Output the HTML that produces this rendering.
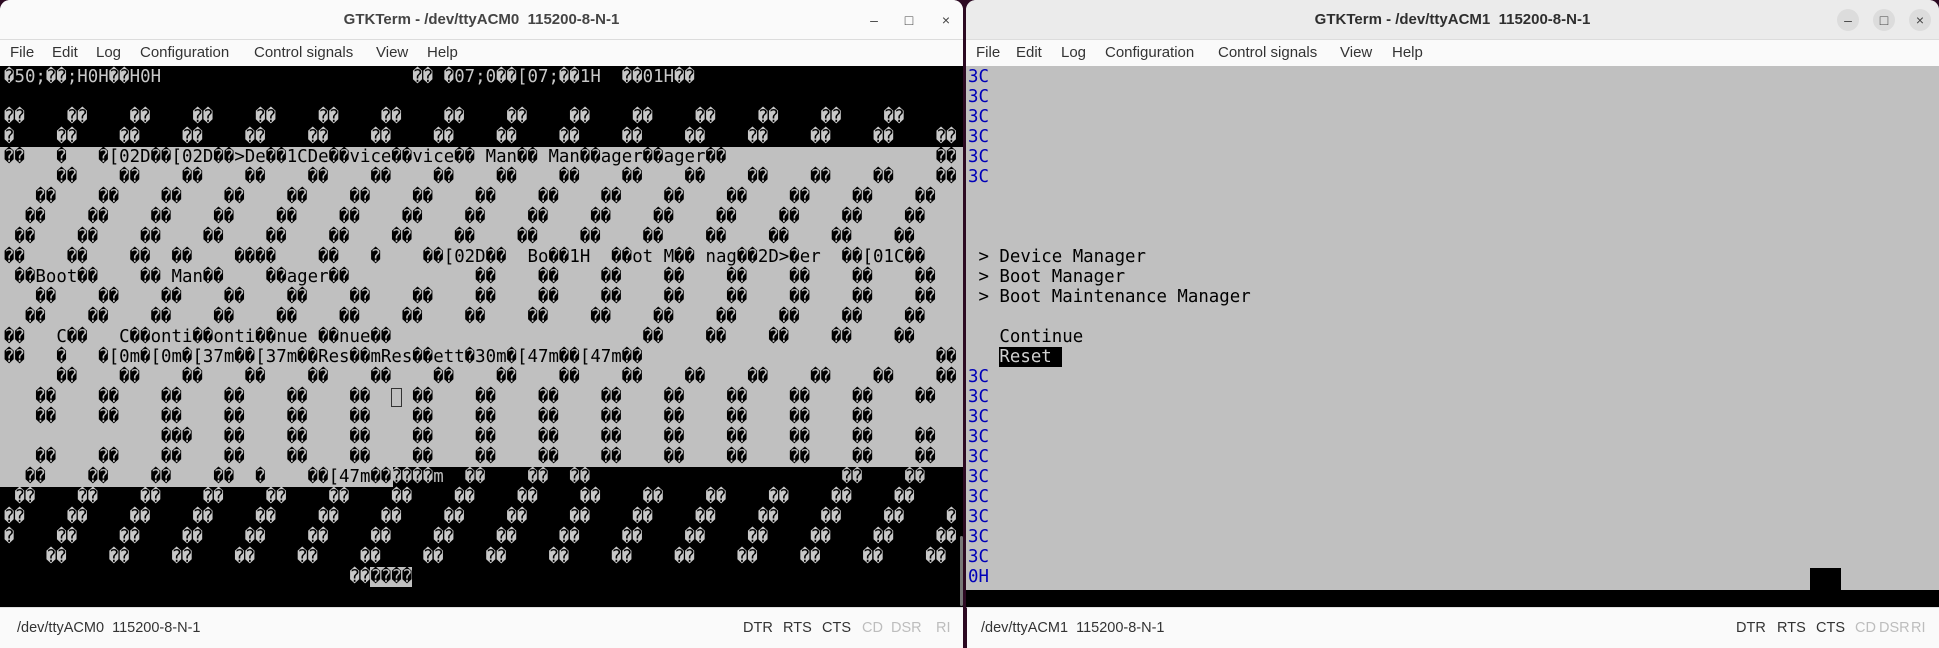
<!DOCTYPE html>
<html><head><meta charset="utf-8"><style>
*{margin:0;padding:0;box-sizing:border-box}
body{width:1939px;height:648px;overflow:hidden;background:#2c0a22;position:relative;font-family:"Liberation Sans","DejaVu Sans",sans-serif}
.win{position:absolute;top:0;height:648px;overflow:hidden;border-radius:10px 10px 0 0;background:#fafafa}
.title{position:absolute;left:0;right:0;top:0;height:40px;border-bottom:1px solid #dcdcdc;font-weight:bold;font-size:15px;color:#2e2e2e;text-align:center;line-height:40px}
.menu{position:absolute;left:0;right:0;top:40px;height:26px;background:#fafafa;font-size:15px;color:#333}
.menu span{position:absolute;top:4px}
.term{position:absolute;left:0;right:0;top:66px;height:541px;background:#000;font-family:"DejaVu Sans Mono","Liberation Mono",monospace;font-size:17.4px}
.row{position:absolute;left:4px;height:20px;line-height:20px;white-space:pre}
.status{position:absolute;left:0;right:0;top:607px;height:41px;background:#fafafa;font-size:14.5px;color:#333;border-top:1px solid #e0e0e0}
.status span{position:absolute;top:12px}
.dim{color:#bdbdbd}
.btn{position:absolute;top:9px;width:22px;height:22px;border-radius:11px;text-align:center;line-height:22px;font-size:14px;color:#444;font-weight:normal}
</style></head><body>

<!-- LEFT WINDOW -->
<div class="win" style="left:0;width:963px">
 <div class="title" style="background:#fafafa;color:#444">GTKTerm - /dev/ttyACM0&nbsp; 115200-8-N-1
  <div class="btn" style="left:863px">–</div><div class="btn" style="left:898px">□</div><div class="btn" style="left:935px">×</div>
 </div>
 <div class="menu"><span style="left:10px">File</span><span style="left:52px">Edit</span><span style="left:96px">Log</span><span style="left:140px">Configuration</span><span style="left:254px">Control signals</span><span style="left:376px">View</span><span style="left:427px">Help</span></div>
 <div class="term" style="color:#c8c8c8">
  <div style="position:absolute;left:0;top:81px;width:963px;height:320px;background:#c0c0c0"></div>
  <div style="position:absolute;left:0;top:401px;width:393px;height:20px;background:#c0c0c0"></div>
  <div style="position:absolute;right:0;top:470px;width:3px;height:70px;background:#777;border-radius:2px"></div>
  <div class="row" style="top:1px">�50;��;H0H��H0H                        �� �07;0��[07;��1H  ��01H��</div>
  <div class="row" style="top:41px">��    ��    ��    ��    ��    ��    ��    ��    ��    ��    ��    ��    ��    ��    ��</div>
  <div class="row" style="top:61px">�    ��    ��    ��    ��    ��    ��    ��    ��    ��    ��    ��    ��    ��    ��    ��</div>
  <div style="color:#000">
  <div class="row" style="top:81px">��   �   �[02D��[02D��>De��1CDe��vice��vice�� Man�� Man��ager��ager��                    ��</div>
  <div class="row" style="top:101px">     ��    ��    ��    ��    ��    ��    ��    ��    ��    ��    ��    ��    ��    ��    ��</div>
  <div class="row" style="top:121px">   ��    ��    ��    ��    ��    ��    ��    ��    ��    ��    ��    ��    ��    ��    ��</div>
  <div class="row" style="top:141px">  ��    ��    ��    ��    ��    ��    ��    ��    ��    ��    ��    ��    ��    ��    ��</div>
  <div class="row" style="top:161px"> ��    ��    ��    ��    ��    ��    ��    ��    ��    ��    ��    ��    ��    ��    ��</div>
  <div class="row" style="top:181px">��    ��    ��  ��    ����    ��   �    ��[02D��  Bo��1H  ��ot M�� nag��2D>�er  ��[01C��</div>
  <div class="row" style="top:201px"> ��Boot��    �� Man��    ��ager��            ��    ��    ��    ��    ��    ��    ��    ��</div>
  <div class="row" style="top:221px">   ��    ��    ��    ��    ��    ��    ��    ��    ��    ��    ��    ��    ��    ��    ��</div>
  <div class="row" style="top:241px">  ��    ��    ��    ��    ��    ��    ��    ��    ��    ��    ��    ��    ��    ��    ��</div>
  <div class="row" style="top:261px">��   C��   C��onti��onti��nue ��nue��                        ��    ��    ��    ��    ��</div>
  <div class="row" style="top:281px">��   �   �[0m�[0m�[37m��[37m��Res��mRes��ett�30m�[47m��[47m��                            ��</div>
  <div class="row" style="top:301px">     ��    ��    ��    ��    ��    ��    ��    ��    ��    ��    ��    ��    ��    ��    ��</div>
  <div class="row" style="top:321px">   ��    ��    ��    ��    ��    ��  <span style="display:inline-block;width:10.5px;height:19px;border:1px solid #333;vertical-align:middle"></span> ��    ��    ��    ��    ��    ��    ��    ��    ��</div>
  <div class="row" style="top:341px">   ��    ��    ��    ��    ��    ��    ��    ��    ��    ��    ��    ��    ��    ��</div>
  <div class="row" style="top:361px">               ���   ��    ��    ��    ��    ��    ��    ��    ��    ��    ��    ��    ��</div>
  <div class="row" style="top:381px">   ��    ��    ��    ��    ��    ��    ��    ��    ��    ��    ��    ��    ��    ��    ��</div>
  <div class="row" style="top:401px">  ��    ��    ��    ��  �    ��[47m��<span style="color:#c0c0c0">����m  ��    ��  ��                        ��    ��</span></div>
  </div>
  <div class="row" style="top:421px"> ��    ��    ��    ��    ��    ��    ��    ��    ��    ��    ��    ��    ��    ��    ��</div>
  <div class="row" style="top:441px">��    ��    ��    ��    ��    ��    ��    ��    ��    ��    ��    ��    ��    ��    ��    �</div>
  <div class="row" style="top:461px">�    ��    ��    ��    ��    ��    ��    ��    ��    ��    ��    ��    ��    ��    ��    ��</div>
  <div class="row" style="top:481px">    ��    ��    ��    ��    ��    ��    ��    ��    ��    ��    ��    ��    ��    ��    ��</div>
  <div class="row" style="top:501px">                                 ��<span style="background:#c0c0c0;color:#000">����</span></div>
 </div>
 <div class="status"><span style="left:17px">/dev/ttyACM0&nbsp; 115200-8-N-1</span><span style="left:743px">DTR</span><span style="left:783px">RTS</span><span style="left:822px">CTS</span><span class="dim" style="left:862px">CD</span><span class="dim" style="left:891px">DSR</span><span class="dim" style="left:936px">RI</span></div>
</div>

<!-- RIGHT WINDOW -->
<div class="win" style="left:966px;width:973px">
 <div class="title" style="background:#ebebeb">GTKTerm - /dev/ttyACM1&nbsp; 115200-8-N-1
  <div class="btn" style="left:871px;background:#dcdcdc">–</div><div class="btn" style="left:907px;background:#dcdcdc">□</div><div class="btn" style="left:943px;background:#dcdcdc">×</div>
 </div>
 <div class="menu"><span style="left:10px">File</span><span style="left:50px">Edit</span><span style="left:95px">Log</span><span style="left:139px">Configuration</span><span style="left:252px">Control signals</span><span style="left:374px">View</span><span style="left:426px">Help</span></div>
 <div class="term" style="color:#000">
  <div style="position:absolute;left:0;top:0;right:0;height:524px;background:#c0c0c0"></div>
  <div style="position:absolute;left:844px;top:502px;width:31px;height:22px;background:#000"></div>
  <div style="color:#0000b8">
  <div class="row" style="left:2px;top:1px">3C</div><div class="row" style="left:2px;top:21px">3C</div><div class="row" style="left:2px;top:41px">3C</div><div class="row" style="left:2px;top:61px">3C</div><div class="row" style="left:2px;top:81px">3C</div><div class="row" style="left:2px;top:101px">3C</div>
  <div class="row" style="left:2px;top:301px">3C</div><div class="row" style="left:2px;top:321px">3C</div><div class="row" style="left:2px;top:341px">3C</div><div class="row" style="left:2px;top:361px">3C</div><div class="row" style="left:2px;top:381px">3C</div><div class="row" style="left:2px;top:401px">3C</div><div class="row" style="left:2px;top:421px">3C</div><div class="row" style="left:2px;top:441px">3C</div><div class="row" style="left:2px;top:461px">3C</div><div class="row" style="left:2px;top:481px">3C</div><div class="row" style="left:2px;top:501px">0H</div>
  </div>
  <div class="row" style="left:2px;top:181px"> &gt; Device Manager</div>
  <div class="row" style="left:2px;top:201px"> &gt; Boot Manager</div>
  <div class="row" style="left:2px;top:221px"> &gt; Boot Maintenance Manager</div>
  <div class="row" style="left:2px;top:261px">   Continue</div>
  <div class="row" style="left:2px;top:281px">   <span style="background:#000;color:#d0d0d0">Reset </span></div>
 </div>
 <div class="status" style="border-left:1px solid #2c0a22"><span style="left:14px">/dev/ttyACM1&nbsp; 115200-8-N-1</span><span style="left:769px">DTR</span><span style="left:810px">RTS</span><span style="left:849px">CTS</span><span class="dim" style="left:888px">CD</span><span class="dim" style="left:912px">DSR</span><span class="dim" style="left:944px">RI</span></div>
</div>
</body></html>
